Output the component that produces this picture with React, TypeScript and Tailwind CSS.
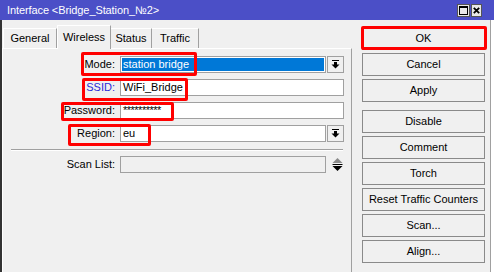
import React from "react";

const DropIcon = () => (
  <svg width="9" height="9" viewBox="0 0 9 9">
    <rect x="1" y="0" width="7" height="1" fill="#000" />
    <rect x="3" y="2" width="3" height="3" fill="#000" />
    <path d="M0.5 4.5 L8.5 4.5 L4.5 8.5 Z" fill="#000" />
  </svg>
);

function Btn({ label, className = "" }: { label: string; className?: string }) {
  return (
    <div
      className={
        "h-[23px] w-[123px] border border-[#8a8a8a] bg-[#f0f0f0] flex items-center justify-center text-[#000] " +
        className
      }
    >
      {label}
    </div>
  );
}

function Row({
  label,
  labelClass = "",
  children,
}: {
  label: string;
  labelClass?: string;
  children: React.ReactNode;
}) {
  return (
    <div className="flex items-center h-[17px]">
      <div className={"w-[112px] text-right " + labelClass}>{label}</div>
      <div className="ml-[5px] flex">{children}</div>
    </div>
  );
}

export default function App() {
  return (
    <div className="relative w-[494px] h-[272px] bg-white overflow-hidden font-['Liberation_Sans',Arial,sans-serif] text-[11px] leading-none text-black">
      {/* Title bar */}
      <div className="h-[20px] bg-[#4b4fc7] flex items-center pl-[7px] text-white text-[11px] tracking-[-0.1px]">
        <span>Interface &lt;Bridge_Station_№2&gt;</span>
        <div className="ml-auto mr-[12px] flex gap-[1px] mt-[1px]">
          <div className="w-[13px] h-[13px] bg-[#e8e8e8] border border-[#555] flex items-center justify-center">
            <div className="w-[9px] h-[9px] border border-black border-t-2" />
          </div>
          <div className="w-[11px] h-[13px] bg-[#e8e8e8] border border-[#555] flex items-center justify-center">
            <svg width="7" height="7" viewBox="0 0 7 7">
              <path d="M0.8 0.8 L6.2 6.2 M6.2 0.8 L0.8 6.2" stroke="#000" strokeWidth="1.8" />
            </svg>
          </div>
        </div>
      </div>

      {/* Body */}
      <div className="flex h-[252px] w-[491px] bg-[#f0f0f0] border-l-2 border-l-[#333] border-r border-r-[#a0a0a0]">
        {/* Left side */}
        <div className="w-[350px] flex flex-col">
          {/* Tabs */}
          <div className="h-[28px] flex items-end pl-[1px]">
            <div className="h-[20px] w-[54px] border-t border-l border-white border-r border-r-[#a0a0a0] flex items-center justify-center">
              General
            </div>
            <div className="h-[24px] w-[54px] border-t border-l border-white border-r border-r-[#a0a0a0] flex items-center justify-center bg-[#f0f0f0] relative z-10 -mb-[1px] pb-[1px]">
              Wireless
            </div>
            <div className="h-[20px] w-[41px] border-t border-white border-r border-r-[#a0a0a0] flex items-center justify-center">
              Status
            </div>
            <div className="h-[20px] w-[47px] border-t border-white border-r border-r-[#a0a0a0] flex items-center justify-center">
              Traffic
            </div>
          </div>
          {/* Panel */}
          <div className="flex-1 border-t border-l border-white border-r border-r-[#a0a0a0] pt-[7px] flex flex-col">
            <div className="flex flex-col gap-[6px]">
              <Row label="Mode:">
                <div className="w-[206px] h-[17px] border border-[#a0a0a0] bg-white p-[1px]">
                  <div className="h-full w-full bg-[#0078d7] text-white flex items-center pl-[1px]">station bridge</div>
                </div>
                <div className="ml-[1px] w-[17px] h-[17px] border border-[#a0a0a0] bg-[#f0f0f0] flex items-center justify-center">
                  <DropIcon />
                </div>
              </Row>
              <Row label="SSID:" labelClass="text-[#2b2bd6]">
                <div className="w-[224px] h-[17px] border border-[#a0a0a0] bg-white flex items-center pl-[2px]">WiFi_Bridge</div>
              </Row>
              <Row label="Password:">
                <div className="w-[224px] h-[17px] border border-[#a0a0a0] bg-white flex items-start pt-[2px] pl-[2px] tracking-[-0.5px]">**********</div>
              </Row>
              <Row label="Region:">
                <div className="w-[206px] h-[17px] border border-[#a0a0a0] bg-white flex items-center pl-[2px]">eu</div>
                <div className="ml-[1px] w-[17px] h-[17px] border border-[#a0a0a0] bg-[#f0f0f0] flex items-center justify-center">
                  <DropIcon />
                </div>
              </Row>
            </div>
            <div className="mt-[7px] ml-[8px] w-[332px] h-[2px] border-t border-t-[#a0a0a0] border-b border-b-white" />
            <div className="mt-[5px] flex items-center h-[17px]">
              <div className="w-[112px] text-right">Scan List:</div>
              <div className="ml-[5px] w-[206px] h-[17px] border border-[#a0a0a0] bg-[#f0f0f0]" />
              <div className="ml-[6px] flex flex-col items-center">
                <svg width="11" height="15" viewBox="0 0 11 15">
                  <path d="M5.5 1 L10.5 6 L0.5 6 Z" fill="#8a8a8a" />
                  <rect x="0.5" y="7" width="10" height="1" fill="#000" />
                  <path d="M0.5 9 L10.5 9 L5.5 14 Z" fill="#000" />
                </svg>
              </div>
            </div>
          </div>
        </div>

        {/* Right side buttons */}
        <div className="flex-1 pl-[10px] pt-[7px] flex flex-col">
          <Btn label="OK" />
          <div className="mt-[3px] flex flex-col gap-[3px]">
            <Btn label="Cancel" />
            <Btn label="Apply" />
          </div>
          <div className="mt-[8px] flex flex-col gap-[3px]">
            <Btn label="Disable" />
            <Btn label="Comment" />
            <Btn label="Torch" />
            <Btn label="Reset Traffic Counters" />
            <Btn label="Scan..." />
            <Btn label="Align..." />
          </div>
        </div>
      </div>

      {/* Red annotation boxes */}
      <div className="absolute left-[59px] top-[27px] w-[52px] h-[20px] border-[3px] border-[#ff0000] rounded-[2px]" />
      <div className="absolute left-[81px] top-[52px] w-[116px] h-[24px] border-[3px] border-[#ff0000] rounded-[2px]" />
      <div className="absolute left-[82px] top-[78px] w-[106px] h-[23px] border-[3px] border-[#ff0000] rounded-[2px]" />
      <div className="absolute left-[61px] top-[102px] w-[113px] h-[19px] border-[3px] border-[#ff0000] rounded-[2px]" />
      <div className="absolute left-[68px] top-[124px] w-[83px] h-[22px] border-[3px] border-[#ff0000] rounded-[2px]" />
      <div className="absolute left-[361px] top-[26px] w-[126px] h-[24px] border-[3px] border-[#ff0000] rounded-[2px]" />
    </div>
  );
}
